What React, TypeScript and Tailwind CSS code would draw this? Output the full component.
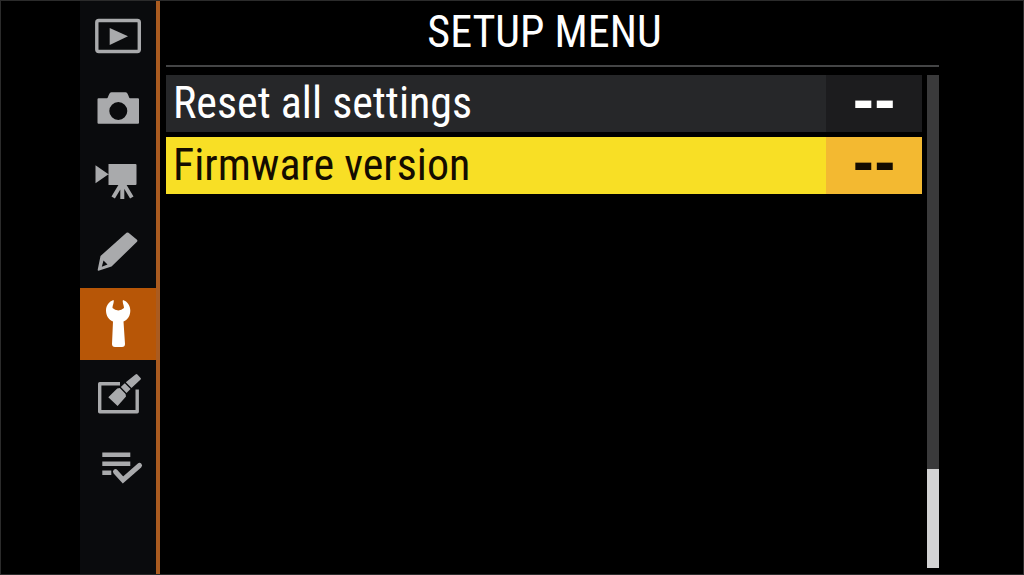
import type { ReactNode } from 'react';

type Tab = { id: string; label: string; icon: ReactNode };

const tabs: Tab[] = [
  {
    id: 'playback',
    label: 'Playback menu',
    icon: (
      <>
        <rect x="16.8" y="20.5" width="42.5" height="31" rx="2" fill="none" stroke="currentColor" strokeWidth="3.4" />
        <path d="M29.7 28v17L48 36.3z" />
      </>
    ),
  },
  {
    id: 'photo',
    label: 'Photo shooting menu',
    icon: (
      <path
        fillRule="evenodd"
        d="M18.500 26.300H27c1.500 0 1.500-6 4.500-6h14c3 0 3 6 4.500 6h8q1 0 1 1v23.500q0 1-1 1H18.500q-1 0-1-1V27.300q0-1 1-1zM38.300 30a9 9 0 1 0 0 18a9 9 0 1 0 0-18z"
      />
    ),
  },
  {
    id: 'movie',
    label: 'Movie shooting menu',
    icon: (
      <>
        <path d="M28.500 20h27q1 0 1 1v19q0 1-1 1h-27zM15.500 21.300v18l13-9z" />
        <path d="M42.300 40v15M41 40.500l-7.800 13M44 40.500l7.800 13" fill="none" stroke="currentColor" strokeWidth="4" />
      </>
    ),
  },
  {
    id: 'custom',
    label: 'Custom settings menu',
    icon: (
      <path
        fillRule="evenodd"
        d="M46.500 16.800q1-.8 2 0l8.500 7q.8 1 0 2L31.500 50.500L18.500 54.800q-1 0-.8-1L20.500 40zM23.500 44.500l-1.700 6.300 5.700-2.300z"
      />
    ),
  },
  {
    id: 'setup',
    label: 'Setup menu',
    icon: (
      <path d="M33.500 12C29 13.500 26 17.500 26 22.500C26 27.500 28.500 31.500 33 33.500L32 56Q32 59 35 59H42Q45 59 45 56L43.500 33.500C48 31.500 50.300 27.500 50.300 22.500C50.300 17.500 47.500 13.500 43 12C42 14 44 17 44 20Q41.500 22 38.300 22.500Q35 22 32.500 20C32.500 17 34.500 14 33.500 12z" />
    ),
  },
  {
    id: 'retouch',
    label: 'Retouch menu',
    icon: (
      <>
        <path d="M40 23.700H19.700V51.800H57.200V29.500" fill="none" stroke="currentColor" strokeWidth="3.400" strokeLinejoin="round" />
        <path d="M55.500 14.500q1-.8 1.900 0l3.200 3.400q.8.900 0 1.700L51.500 28l-5.700-5.800zM44.800 23.200l5.700 5.800-4 3.900-5.700-5.800zM39.800 28l5.800 5.900.4 2.600L37.600 46l-9.300-8.700 8.900-8.900z" />
      </>
    ),
  },
  {
    id: 'my-menu',
    label: 'My menu',
    icon: (
      <>
        <path d="M22.300 20.500h28v4.500h-28zM22.300 29.500h28v4.500h-28zM22.300 38.500h9v4.500h-9z" />
        <path d="M35.500 39.700l7.500 8.300 16.500-14.500" fill="none" stroke="currentColor" strokeWidth="5" strokeLinecap="round" />
      </>
    ),
  },
];

const rows = [
  { label: 'Reset all settings', value: '--', selected: false },
  { label: 'Firmware version', value: '--', selected: true },
];

export default function App() {
  return (
    <div className='flex min-h-screen bg-black pr-[85px] pl-20 font-["Roboto_Condensed",sans-serif] text-white outline-1 -outline-offset-1 outline-[#2b2b2b]'>
      <nav aria-label="Menus" className="flex flex-col border-r-4 border-[#aa5b20] bg-[#0a0b0d]">
        {tabs.map((tab) => (
          <button
            key={tab.id}
            type="button"
            aria-label={tab.label}
            className={tab.id === 'setup' ? 'bg-[#b75607] text-white' : 'text-[#a9aaac]'}
          >
            <svg viewBox="0 0 76 72" fill="currentColor" className="h-[72px] w-[76px]" aria-hidden="true">
              {tab.icon}
            </svg>
          </button>
        ))}
      </nav>

      <main className="flex flex-1 flex-col pb-[7px] pl-[6px]">
        <h1 className="border-b-2 border-[#444546] pr-4 text-center text-[44px] leading-[65px]">
          SETUP MENU
        </h1>
        <div className="mt-2 flex flex-1 gap-[5px]">
          <ul className="flex flex-1 flex-col gap-[5px]">
            {rows.map((row) => (
              <li key={row.label}>
                <button
                  type="button"
                  className={
                    row.selected
                      ? 'flex h-[57px] w-full bg-[#f8df25] text-left text-[#140c00]'
                      : 'flex h-[57px] w-full bg-[#262729] text-left'
                  }
                >
                  <span className="flex-1 pl-[7px] text-[44px] leading-[57px]">{row.label}</span>
                  <span
                    className={
                      row.selected
                        ? 'w-24 bg-[#f3b931] text-center font-["DejaVu_Sans",sans-serif] text-[52px] leading-[52px] font-bold'
                        : 'w-24 bg-[#1c1c1e] text-center font-["DejaVu_Sans",sans-serif] text-[52px] leading-[52px] font-bold'
                    }
                  >
                    {row.value}
                  </span>
                </button>
              </li>
            ))}
          </ul>
          <div className="flex w-3 flex-col justify-end bg-[#3a3a3b]">
            <div className="h-1/5 bg-[#d3d3d4]" />
          </div>
        </div>
      </main>
    </div>
  );
}
